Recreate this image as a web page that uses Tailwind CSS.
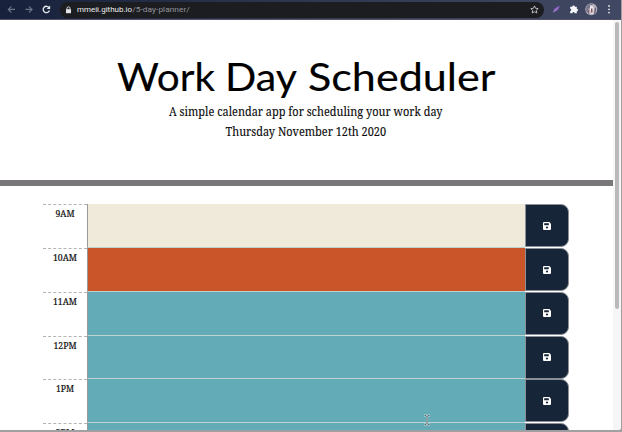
<!DOCTYPE html>
<html lang="en">
<head>
<meta charset="utf-8">
<title>Work Day Scheduler</title>
<script src="https://cdn.jsdelivr.net/npm/@tailwindcss/browser@4"></script>
</head>
<body class="w-[622px] h-[432px] overflow-hidden bg-[#a0a0a2]">
<div class="relative flex flex-col w-[621px] h-[430px] overflow-hidden rounded-br-[3px] bg-white">
  <header class="flex items-center h-5 shrink-0 bg-gradient-to-r from-[#18213b] via-[#303850] to-[#414863] border-b border-[#555267]">
    <svg class="w-[60px] h-[19px] shrink-0" viewBox="0 0 60 19" fill="none" stroke="#6d758a" stroke-width="1.1">
      <path d="M15 9.4H8.5M11.4 6.3 8.3 9.4l3.1 3.1M25.5 9.4H32M29 6.3l3.1 3.1L29 12.5"/>
      <path d="M49 7.6A3.2 3.2 0 1 0 49.4 10.6" stroke="#e8eaf0" stroke-width="1.3"/>
      <path d="M50.1 5.6v3.5h-3.5z" fill="#e8eaf0" stroke="none"/>
    </svg>
    <div class="flex items-center w-[484px] h-4 rounded-full bg-[#1c1d21] pl-[5px] pr-[5px]">
      <svg class="w-[7px] h-[8px]" viewBox="0 0 7 8"><path d="M1 3.2h5v4H1z" fill="#e5e5e7"/><path d="M2 3.5V2.3a1.5 1.5 0 0 1 3 0v1.2" fill="none" stroke="#e5e5e7" stroke-width=".9"/></svg>
      <svg class="w-[130px] h-4 ml-[5px]" font-family="Roboto, sans-serif" font-size="7.7">
        <text x="0" y="10.4" fill="#eeeef0" textLength="55" lengthAdjust="spacingAndGlyphs">mmeii.github.io</text>
        <text x="55.3" y="10.4" fill="#92949a" textLength="57.5" lengthAdjust="spacingAndGlyphs">/5-day-planner/</text>
      </svg>
      <svg class="w-[9px] h-[9px] ml-auto" viewBox="0 0 9 9"><path d="m4.5.9 1.1 2.4 2.6.3-1.9 1.8.5 2.6-2.3-1.3L2.2 8l.5-2.6L.8 3.6l2.6-.3z" fill="none" stroke="#c6c7ca" stroke-width=".9"/></svg>
    </div>
    <svg class="w-[77px] h-[19px] shrink-0" viewBox="544 0 77 19">
      <path d="M553 12.2c.3-3.1 3-5.5 6.8-6.2-.3 3-2.4 5.4-6.8 6.2z" fill="#8058b4"/><path d="m553.4 12 4.4-4.3" stroke="#c39bea" stroke-width=".8"/>
      <path d="M570.2 6.7h2a1.3 1.3 0 0 1 2.6 0h2v2.1a1.2 1.2 0 0 1 0 2.4v2h-2.2a1.1 1.1 0 0 0-2.2 0h-2.2V11a1.1 1.1 0 0 0 0-2.2z" fill="#f7f7fb"/>
      <circle cx="591.3" cy="9.2" r="6" fill="#b4aeb9"/>
      <path d="M586.5 6.5c1.2-2.2 4-3 6-2l-1 3-3 1-1 4-1.5-1.5z" fill="#77748c"/><path d="m590 5 3 1 1 3-1 5h-2l-1-4z" fill="#e9e6ea"/><path d="M591 8.5h1.5v4H591zM588 10h1v3.5h-1z" fill="#83545c"/><path d="m595 7 1.3 2-1 4-1.3 1z" fill="#646077"/>
      <g fill="#e7e8ee"><circle cx="609" cy="6" r=".9"/><circle cx="609" cy="9.3" r=".9"/><circle cx="609" cy="12.6" r=".9"/></g>
    </svg>
  </header>

  <div class="flex flex-1 min-h-0">
    <main class="w-[613px] shrink-0">
      <section class="h-[166px] border-b-[6px] border-[#797779]">
        <svg class="block w-[613px] h-[130px]" viewBox="0 20 613 130">
          <g font-family="Lato, sans-serif" font-size="39" fill="#000" stroke="#000" stroke-width=".15" stroke-linejoin="round">
            <text x="117" y="90.5" textLength="98" lengthAdjust="spacingAndGlyphs">Work</text>
            <text x="225" y="90.5" textLength="72" lengthAdjust="spacingAndGlyphs">Day</text>
            <text x="308" y="90.5" textLength="187.5" lengthAdjust="spacingAndGlyphs">Scheduler</text>
          </g>
          <g font-family="'Noto Serif', 'Droid Serif', 'DejaVu Serif Condensed', 'DejaVu Serif', serif" font-size="11.7" fill="#0b0b0b" stroke="#0b0b0b" stroke-width=".12">
            <text x="169" y="115.5" textLength="273.5" lengthAdjust="spacingAndGlyphs">A simple calendar app for scheduling your work day</text>
            <text x="225.5" y="135.6" textLength="160.5" lengthAdjust="spacingAndGlyphs">Thursday November 12th 2020</text>
          </g>
        </svg>
      </section>
      <section id="hours" class="w-[526px] ml-[43px] mt-[18.4px]"></section>
    </main>
    <div class="flex-1 bg-[#f6f6f6] pl-[2px] pt-[2px]"><div class="w-[4px] h-[287px] rounded-full bg-[#b9b9b9]"></div></div>
  </div>

  <svg class="absolute left-[423px] top-[414px] w-2 h-3" viewBox="0 0 8 12" fill="none"><path d="M1 1.5h2l1 1 1-1h2M4 2v7.5M1 10.5h2l1-1 1 1h2" stroke="#c0dade" stroke-width="2"/><path d="M1.5 1.5H3l1 1 1-1h1.5M4 2v7.5M1.5 10.5H3l1-1 1 1h1.5" stroke="#596d72" stroke-width="1"/></svg>
</div>
<script>
const rows = [
  ['9AM', 'bg-[#efead9]', 19], ['10AM', 'bg-[#c95529]', 24], ['11AM', 'bg-[#63abb7]', 24],
  ['12PM', 'bg-[#63abb7]', 23], ['1PM', 'bg-[#63abb7]', 18], ['2PM', 'bg-[#63abb7]', 19]
];
document.getElementById('hours').innerHTML = rows.map(([label, color, width]) => `
  <div class="flex h-[43.75px]">
    <div class="w-[44px] shrink-0 border-t border-dashed border-[#b4b4b4]">
      <svg class="block w-[44px] h-[20px]"><text x="${22 - width / 2}" y="12" textLength="${width}" lengthAdjust="spacingAndGlyphs" font-family="'Noto Serif', 'Droid Serif', 'DejaVu Serif Condensed', 'DejaVu Serif', serif" font-size="9" fill="#111" stroke="#111" stroke-width=".2">${label}</text></svg>
    </div>
    <div class="w-[438px] shrink-0 border-l border-b border-l-[#979a98] border-b-[#bfd1d1] ${color}"></div>
    <div class="flex items-center justify-center w-[44px] h-[43px] shrink-0 rounded-r-[8px] border border-[#8b9097] bg-[#172538]">
      <svg class="w-[8px] h-[8px]" viewBox="0 0 8 8"><path d="M1 0h5.3L8 1.7V7a1 1 0 0 1-1 1H1a1 1 0 0 1-1-1V1a1 1 0 0 1 1-1z" fill="#fff"/><path d="M1.2 1.2h4.6v2H1.2z" fill="#172538"/><circle cx="4" cy="5.5" r="1.1" fill="#172538"/></svg>
    </div>
  </div>`).join('');
</script>
</body>
</html>
